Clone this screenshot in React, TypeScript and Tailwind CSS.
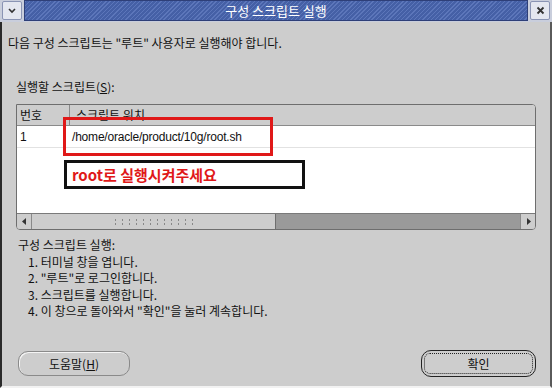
import React from 'react';

const steps = [
  '1. 터미널 창을 엽니다.',
  '2. "루트"로 로그인합니다.',
  '3. 스크립트를 실행합니다.',
  '4. 이 창으로 돌아와서 "확인"을 눌러 계속합니다.',
];

const TitleButton: React.FC<{ children: React.ReactNode }> = ({ children }) => (
  <div className="w-[20px] h-[19px] mt-[1px] rounded-[2px] border border-[#8a94b4] bg-[#e4e7f0] flex items-center justify-center">
    {children}
  </div>
);

const App: React.FC = () => {
  return (
    <div
      className="w-[552px] h-[388px] bg-[#cdcdcd] flex flex-col text-[12px] leading-[14px] text-[#111] overflow-hidden"
      style={{ fontFamily: '"Noto Sans CJK KR", "Liberation Sans", sans-serif' }}
    >
      {/* Title bar */}
      <div className="h-[22px] flex items-start gap-[2px] px-[2px] bg-[#c9cedc]">
        <TitleButton>
          <svg width="10" height="8" viewBox="0 0 10 8">
            <path d="M2 2 L5 5 L8 2" stroke="#333" strokeWidth="1.6" fill="none" />
          </svg>
        </TitleButton>
        <div className="flex-1 h-[21px] border border-[#2e3f78] bg-[repeating-linear-gradient(135deg,#5c76ba_0px,#5c76ba_1px,#4560a6_1px,#4560a6_3px)] flex items-center justify-center text-white text-[13px]">
          구성 스크립트 실행
        </div>
        <TitleButton>
          <svg width="9" height="9" viewBox="0 0 9 9">
            <path d="M1.5 1.5 L7.5 7.5 M7.5 1.5 L1.5 7.5" stroke="#333" strokeWidth="1.8" />
          </svg>
        </TitleButton>
      </div>

      {/* Body */}
      <div className="flex-1 flex flex-col border-l-2 border-r-2 border-b-2 border-l-[#2a2a2a] border-r-[#5a5a5a] border-b-[#f2f2f2] pl-[6px] pr-[14px]">
        <div className="mt-[14px]">다음 구성 스크립트는 "루트" 사용자로 실행해야 합니다.</div>

        <div className="mt-[30px] ml-[8px]">
          실행할 스크립트(<span className="underline">S</span>):
        </div>

        {/* Table */}
        <div className="mt-[10px] ml-[8px] h-[126px] border border-[#6e6e6e] rounded-tr-[4px] rounded-b-[4px] bg-white flex flex-col overflow-hidden">
          <div className="h-[21px] flex bg-[#cdcdcd] border-b border-[#8a8a8a]">
            <div className="w-[53px] pl-[3px] flex items-center border-r border-[#8a8a8a]">번호</div>
            <div className="flex-1 pl-[6px] flex items-center">스크립트 위치</div>
          </div>
          <div className="relative flex-1">
            <div className="h-[22px] flex border-b border-[#e2e2e2]" style={{ fontFamily: '"Liberation Sans", sans-serif' }}>
              <div className="w-[53px] pl-[3px] flex items-center">1</div>
              <div className="flex-1 pl-[2px] flex items-center tracking-[-0.2px]">/home/oracle/product/10g/root.sh</div>
            </div>
            {/* annotations */}
            <div className="absolute left-[46px] top-[-9px] w-[210px] h-[39px] border-[3px] border-[#e01818]" />
            <div className="absolute left-[47px] top-[34px] w-[241px] h-[29px] border-[3px] border-[#111] flex items-center pl-[5px] text-[15px] font-bold text-[#e01818]">
              root<span className="font-semibold">로 실행시켜주세요</span>
            </div>
          </div>
          {/* horizontal scrollbar */}
          <div className="h-[16px] flex bg-[#9a9a9a] border-t border-[#7a7a7a]">
            <div className="w-[15px] bg-[#cdcdcd] border-r border-[#8a8a8a] flex items-center justify-center">
              <svg width="5" height="7" viewBox="0 0 5 7"><path d="M4 0 L0 3.5 L4 7 Z" fill="#333" /></svg>
            </div>
            <div className="w-[244px] bg-[#cdcdcd] border-r border-[#6e6e6e] flex items-center justify-center">
              <div className="w-[84px] h-[7px] bg-[radial-gradient(circle,#888_0.8px,transparent_1px)] bg-[length:7px_4px]" />
            </div>
            <div className="flex-1" />
            <div className="w-[15px] bg-[#cdcdcd] border-l border-[#8a8a8a] flex items-center justify-center">
              <svg width="5" height="7" viewBox="0 0 5 7"><path d="M1 0 L5 3.5 L1 7 Z" fill="#333" /></svg>
            </div>
          </div>
        </div>

        <div className="mt-[8px] ml-[10px] flex flex-col gap-[2.5px]">
          <div>구성 스크립트 실행:</div>
          {steps.map((s) => (
            <div key={s} className="ml-[10px]">{s}</div>
          ))}
        </div>

        <div className="mt-auto mb-[9px] ml-[10px] flex justify-between items-center">
          <div className="w-[112px] h-[25px] rounded-[10px] border border-[#8a8a8a] bg-[#cdcdcd] flex items-center justify-center shadow-[inset_1px_1px_0_#f4f4f4]">
            도움말(<span className="underline">H</span>)
          </div>
          <div className="w-[115px] h-[27px] rounded-[10px] border border-[#222] bg-[#cdcdcd] p-[2px]">
            <div className="w-full h-full rounded-[6px] border border-dotted border-[#222] flex items-center justify-center">확인</div>
          </div>
        </div>
      </div>
    </div>
  );
};

export default App;
